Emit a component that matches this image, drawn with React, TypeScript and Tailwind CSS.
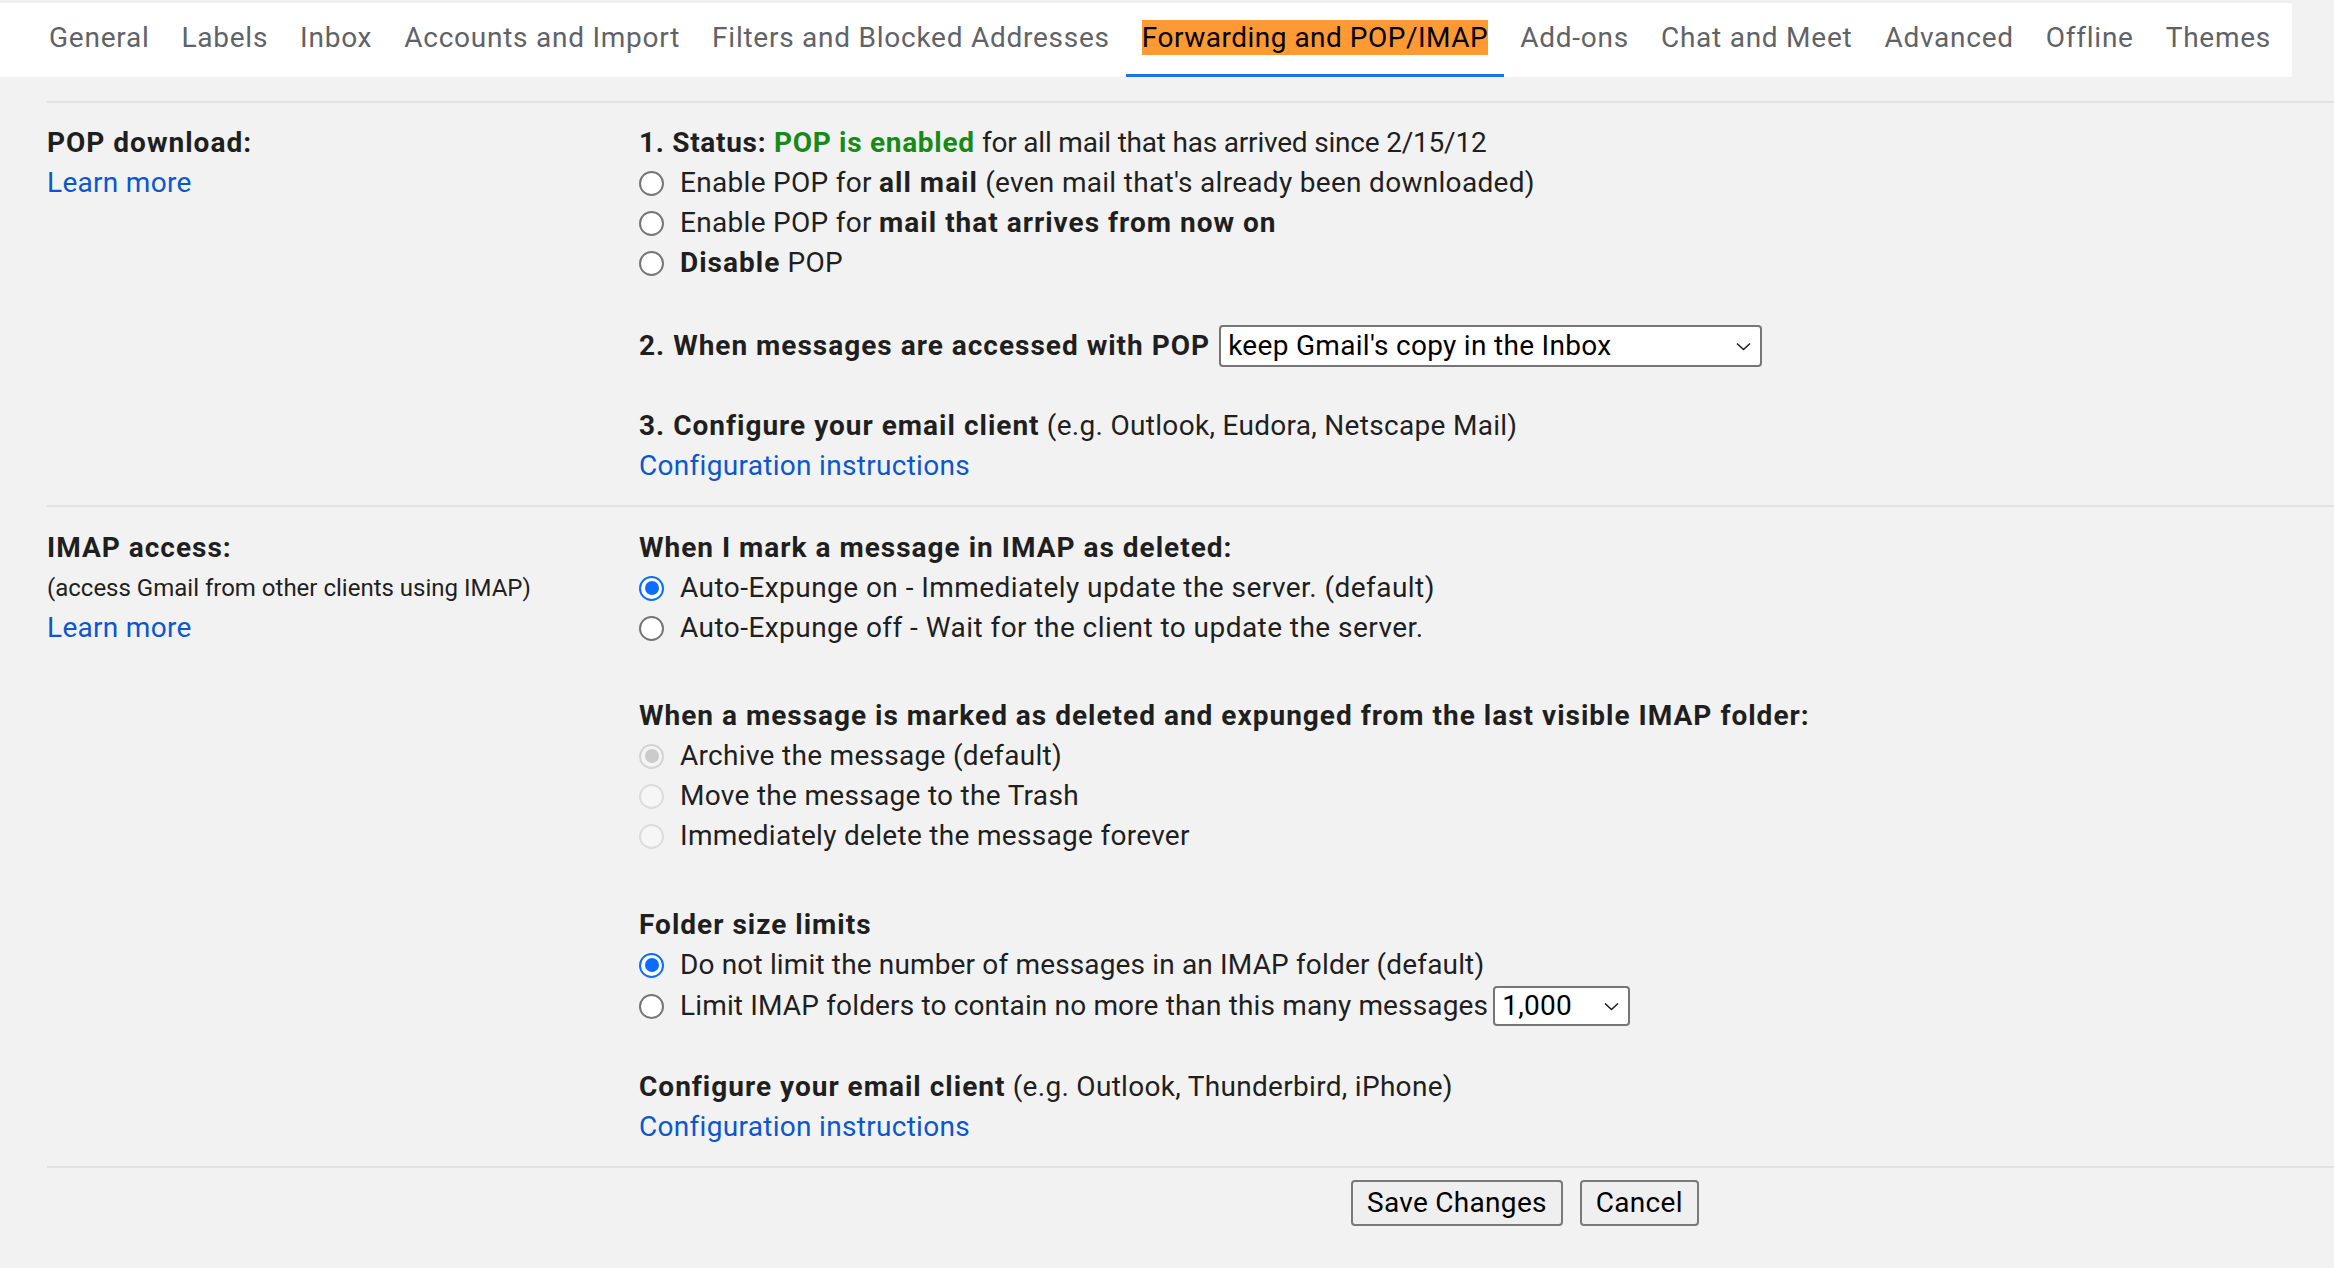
import React from 'react';

const tabs = [
  'General',
  'Labels',
  'Inbox',
  'Accounts and Import',
  'Filters and Blocked Addresses',
  'Forwarding and POP/IMAP',
  'Add-ons',
  'Chat and Meet',
  'Advanced',
  'Offline',
  'Themes',
];

type RadioState = 'on' | 'off' | 'disabled-on' | 'disabled-off';

const B: React.FC<{ children: React.ReactNode; className?: string }> = ({ children, className = '' }) => (
  <span className={`font-bold tracking-[1px] ${className}`}>{children}</span>
);

const Radio: React.FC<{ state: RadioState; children: React.ReactNode }> = ({ state, children }) => {
  let ring = 'border-2 border-[#767676] bg-white';
  let dot = '';
  if (state === 'on') {
    ring = 'border-[2.5px] border-[#0b6cff] bg-white';
    dot = 'bg-[#0b6cff]';
  } else if (state === 'disabled-on') {
    ring = 'border-2 border-[#d4d4d4] bg-[#f4f4f4]';
    dot = 'bg-[#cbcbcb]';
  } else if (state === 'disabled-off') {
    ring = 'border-2 border-[#dcdcdc] bg-[#f6f6f6]';
  }
  return (
    <div className="flex h-[40px] items-center">
      <span className={`flex h-[25px] w-[25px] shrink-0 items-center justify-center rounded-full ${ring}`}>
        {dot && <span className={`h-[14px] w-[14px] rounded-full ${dot}`} />}
      </span>
      <span className="ml-[16px]">{children}</span>
    </div>
  );
};

const Chevron: React.FC = () => (
  <svg width="15" height="9" viewBox="0 0 15 9" fill="none">
    <path d="M1 1.5 L7.5 7.5 L14 1.5" stroke="#1f1f1f" strokeWidth="1.6" />
  </svg>
);

const Select: React.FC<{ value: string; className: string }> = ({ value, className }) => (
  <div
    className={`flex items-center justify-between rounded-[4px] border-2 border-[#767676] bg-white pl-[7px] pr-[9px] text-black ${className}`}
  >
    <span>{value}</span>
    <Chevron />
  </div>
);

const Link: React.FC<{ children: React.ReactNode }> = ({ children }) => (
  <div className="text-[#0b57d0]">{children}</div>
);

export default function App() {
  return (
    <div className="min-h-screen w-full bg-[#f2f2f2] text-[28px] leading-[40px] tracking-[0.3px] text-[#1f1f1f] [font-family:Roboto,'Open_Sans',sans-serif]">
      {/* tab strip */}
      <div className="flex h-[77px] w-[2292px] border-t-[3px] border-[#f0f0f0] bg-white pl-[33px] tracking-[0.75px]">
        {tabs.map((t) => {
          const active = t === 'Forwarding and POP/IMAP';
          return (
            <div
              key={t}
              className={`flex h-full shrink-0 items-start whitespace-nowrap border-b-[3px] px-4 pt-[17px] ${
                active ? 'border-[#1a73e8]' : 'border-transparent'
              }`}
            >
              <span
                className={`leading-[35px] ${active ? 'bg-[#ff9933] text-black tracking-[0.5px]' : 'text-[#5f6368]'}`}
              >
                {t}
              </span>
            </div>
          );
        })}
      </div>

      <div className="pl-[47px] pt-[24px]">
        {/* POP */}
        <div className="grid grid-cols-[592px_1fr] border-t-2 border-[#e2e2e2] pb-[19px] pt-[20px]">
          <div>
            <B>POP download:</B>
            <Link>Learn more</Link>
          </div>
          <div>
            <div>
              <B className="!tracking-[0.7px]">1. Status: </B>
              <B className="text-[#188a18] !tracking-[0.7px]">POP is enabled</B>{' '}
              <span className="tracking-[-0.2px]">for all mail that has arrived since 2/15/12</span>
            </div>
            <Radio state="off">
              Enable POP for <B>all mail</B> (even mail that's already been downloaded)
            </Radio>
            <Radio state="off">
              Enable POP for <B>mail that arrives from now on</B>
            </Radio>
            <Radio state="off">
              <B>Disable</B> POP
            </Radio>
            <div className="mt-[42px] flex h-[42px] items-center">
              <B className="mr-[9px]">2. When messages are accessed with POP</B>
              <Select value="keep Gmail's copy in the Inbox" className="h-[42px] w-[543px]" />
            </div>
            <div className="mt-[39px]">
              <B>3. Configure your email client</B> (e.g. Outlook, Eudora, Netscape Mail)
            </div>
            <Link>Configuration instructions</Link>
          </div>
        </div>

        {/* IMAP */}
        <div className="grid grid-cols-[592px_1fr] border-t-2 border-[#e2e2e2] pb-[19px] pt-[21px]">
          <div>
            <B>IMAP access:</B>
            <div className="text-[24px] tracking-normal">(access Gmail from other clients using IMAP)</div>
            <Link>Learn more</Link>
          </div>
          <div>
            <div>
              <B>When I mark a message in IMAP as deleted:</B>
            </div>
            <Radio state="on">
              <span className="tracking-[0.45px]">Auto-Expunge on - Immediately update the server. (default)</span>
            </Radio>
            <Radio state="off">
              <span className="tracking-[0.45px]">Auto-Expunge off - Wait for the client to update the server.</span>
            </Radio>

            <div className="mt-[48px]">
              <B>When a message is marked as deleted and expunged from the last visible IMAP folder:</B>
            </div>
            <Radio state="disabled-on">Archive the message (default)</Radio>
            <Radio state="disabled-off">Move the message to the Trash</Radio>
            <Radio state="disabled-off">Immediately delete the message forever</Radio>

            <div className="mt-[49px]">
              <B>Folder size limits</B>
            </div>
            <Radio state="on">
              <span className="tracking-[0.15px]">Do not limit the number of messages in an IMAP folder (default)</span>
            </Radio>
            <div className="flex h-[42px] items-center">
              <span className="flex h-[25px] w-[25px] shrink-0 rounded-full border-2 border-[#767676] bg-white" />
              <span className="ml-[16px] mr-[5px] tracking-[0.15px]">
                Limit IMAP folders to contain no more than this many messages
              </span>
              <Select value="1,000" className="h-[40px] w-[137px]" />
            </div>

            <div className="mt-[40px]">
              <B>Configure your email client</B> (e.g. Outlook, Thunderbird, iPhone)
            </div>
            <Link>Configuration instructions</Link>
          </div>
        </div>

        {/* actions */}
        <div className="flex gap-[17px] border-t-2 border-[#e2e2e2] pb-[40px] pl-[1304px] pt-[12px]">
          <button className="h-[46px] rounded-[4px] border-2 border-[#7a7a7a] bg-[#efefef] px-[14px] text-black">
            Save Changes
          </button>
          <button className="h-[46px] rounded-[4px] border-2 border-[#7a7a7a] bg-[#efefef] px-[14px] text-black">
            Cancel
          </button>
        </div>
      </div>
    </div>
  );
}
